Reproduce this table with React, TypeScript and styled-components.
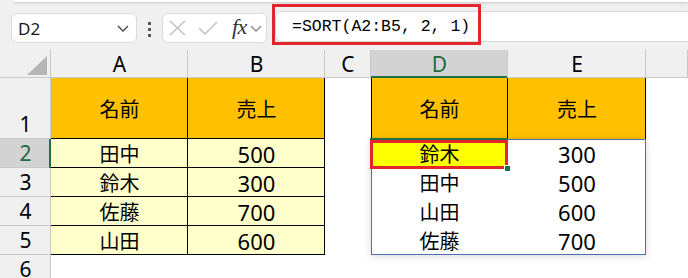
import React from "react";
import styled, { createGlobalStyle, css } from "styled-components";

const GlobalStyle = createGlobalStyle`
  html, body {
    margin: 0;
    padding: 0;
    background: #ffffff;
    overflow: hidden;
  }
  body {
    font-family: "Noto Sans", "Noto Sans CJK JP", sans-serif;
  }
`;

const Page = styled.div`
  width: 688px;
  height: 278px;
  overflow: hidden;
  background: #fff;
`;

/* ---------- formula bar ---------- */

const Top = styled.div`
  background: #f0f0f0;
  height: 50px;
  display: flex;
  flex-direction: column;
`;

const RibbonEdge = styled.div`
  height: 2px;
  margin-left: 13px;
  background: #fff;
  border-bottom-left-radius: 6px;
  box-shadow: 0 1px 3px rgba(0, 0, 0, 0.22);
`;

const Bar = styled.div`
  display: flex;
  align-items: flex-start;
  padding: 10px 0 0 11px;
`;

const Box = styled.div`
  height: 30px;
  box-sizing: border-box;
  background: #fff;
  border: 1px solid #dadada;
  border-radius: 6px;
  display: flex;
  align-items: center;
`;

const NameBox = styled(Box)`
  margin-top: 1px;
  width: 126px;
  padding: 0 7px 0 6px;
  justify-content: space-between;
  font-size: 17px;
  color: #1a1a1a;
`;

const Dots = styled.div`
  margin: 10px 11px 0 11px;
  display: flex;
  flex-direction: column;
  gap: 3px;
  span {
    width: 3px;
    height: 3px;
    background: #555;
  }
`;

const FxGroup = styled(Box)`
  margin-top: 1px;
  width: 105px;
  padding: 0 0 0 6px;
  gap: 0;
`;

const Fx = styled.span`
  font-family: "Liberation Serif", serif;
  font-style: italic;
  font-size: 22px;
  color: #333;
  margin: -3px 3px 0 14px;
  letter-spacing: -0.5px;
`;

const FormulaInput = styled.div`
  position: relative;
  flex: 1;
  margin-left: 8px;
  margin-top: -1px;
  height: 31px;
  box-sizing: border-box;
  background: #fff;
  border: 1px solid #d8d8d8;
  border-right: none;
  border-radius: 6px 0 0 6px;
  display: flex;
  align-items: center;
  padding-left: 16px;
  font-family: "Liberation Mono", monospace;
  font-size: 16.5px;
  color: #000;
  white-space: pre;
`;

const RedFrame = styled.div`
  position: absolute;
  left: -4px;
  top: -8px;
  width: 209px;
  height: 41px;
  box-sizing: border-box;
  border: 3px solid #e3262c;
  pointer-events: none;
`;

/* ---------- sheet ---------- */

const Sheet = styled.div`
  display: grid;
  grid-template-columns: 51px 137px 137px 46px 137px 138px 1fr;
  grid-template-rows: 28px 61px 29px 29px 29px 29px 29px;
`;

const place = css<{ $c: number; $r: number }>`
  grid-column: ${({ $c }) => $c};
  grid-row: ${({ $r }) => $r};
`;

const Corner = styled.div<{ $c: number; $r: number }>`
  ${place};
  background: #f0f0f0;
  box-shadow: inset -1px -1px 0 #c9c9c9;
  display: flex;
  align-items: flex-end;
  justify-content: flex-end;
  padding: 0 4px 3px 0;
`;

const ColHead = styled.div<{ $c: number; $r: number; $active?: boolean }>`
  ${place};
  display: flex;
  align-items: center;
  justify-content: center;
  font-size: 21px;
  background: ${({ $active }) => ($active ? "#d3d3d3" : "#f0f0f0")};
  color: ${({ $active }) => ($active ? "#1d6b40" : "#000")};
  box-shadow: ${({ $active }) =>
    $active
      ? "inset -1px 0 0 #c9c9c9, inset 0 -2px 0 #1e7145"
      : "inset -1px 0 0 #c9c9c9, inset 0 -1px 0 #c9c9c9"};
`;

const RowHead = styled.div<{ $c: number; $r: number; $active?: boolean }>`
  ${place};
  display: flex;
  align-items: flex-end;
  justify-content: center;
  padding-bottom: 4px;
  box-sizing: border-box;
  line-height: 1;
  font-size: 21px;
  background: ${({ $active }) => ($active ? "#d3d3d3" : "#f0f0f0")};
  color: ${({ $active }) => ($active ? "#1d6b40" : "#000")};
  box-shadow: ${({ $active }) =>
    $active
      ? "inset -2px 0 0 #1e7145, inset 0 -1px 0 #c9c9c9"
      : "inset -1px 0 0 #c9c9c9, inset 0 -1px 0 #c9c9c9"};
`;

const lineShadow = (lines: string) => {
  const parts: string[] = [];
  if (lines.includes("r")) parts.push("inset -1px 0 0 #000");
  if (lines.includes("b")) parts.push("inset 0 -1px 0 #000");
  if (lines.includes("l")) parts.push("inset 1px 0 0 #000");
  return parts.length ? parts.join(", ") : "none";
};

const Cell = styled.div<{
  $c: number;
  $r: number;
  $bg?: string;
  $lines?: string;
  $num?: boolean;
}>`
  ${place};
  display: flex;
  align-items: center;
  justify-content: center;
  background: ${({ $bg }) => $bg || "#fff"};
  box-shadow: ${({ $lines }) => lineShadow($lines || "")};
  color: #000;
  font-family: ${({ $num }) =>
    $num ? '"Noto Sans", sans-serif' : '"Noto Sans CJK JP", sans-serif'};
  font-size: ${({ $num }) => ($num ? "22px" : "20px")};
`;

const SpillRange = styled.div`
  grid-column: 5 / 7;
  grid-row: 3 / 7;
  border: 1px solid #4a6fb6;
  box-shadow: 0 1px 8px rgba(0, 0, 0, 0.16);
  pointer-events: none;
  z-index: 1;
`;

const ActiveCell = styled.div`
  grid-column: 5;
  grid-row: 3;
  position: relative;
  margin: 1px 0 -1px -1px;
  border: 3px solid #e3262c;
  box-shadow: 0 -2px 0 #1e7145;
  pointer-events: none;
  z-index: 2;
`;

const FillHandle = styled.span`
  position: absolute;
  right: -5px;
  bottom: -5px;
  width: 5px;
  height: 5px;
  background: #1e7145;
  border-left: 1px solid #fff;
  border-top: 1px solid #fff;
`;

const ORANGE = "#ffc000";
const CREAM = "#ffffcc";

const source = [
  ["田中", "500"],
  ["鈴木", "300"],
  ["佐藤", "700"],
  ["山田", "600"],
];

const sorted = [
  ["鈴木", "300"],
  ["田中", "500"],
  ["山田", "600"],
  ["佐藤", "700"],
];

const Chevron = ({ color }: { color: string }) => (
  <svg width="12" height="7" viewBox="0 0 12 7">
    <path d="M1 1l5 5 5-5" fill="none" stroke={color} strokeWidth="1.3" />
  </svg>
);

export default function App() {
  const letters = ["A", "B", "C", "D", "E", ""];
  return (
    <Page>
      <GlobalStyle />
      <Top>
        <RibbonEdge />
        <Bar>
          <NameBox>
            <span>D2</span>
            <Chevron color="#444" />
          </NameBox>
          <Dots>
            <span />
            <span />
            <span />
          </Dots>
          <FxGroup>
            <svg width="17" height="16" viewBox="0 0 17 16">
              <path d="M1 1l15 14M16 1L1 15" stroke="#bdbdbd" strokeWidth="1.4" />
            </svg>
            <svg width="20" height="14" viewBox="0 0 20 14" style={{ marginLeft: 12 }}>
              <path d="M1 7l6 6L19 1" fill="none" stroke="#bdbdbd" strokeWidth="1.4" />
            </svg>
            <Fx>fx</Fx>
            <Chevron color="#8a8a8a" />
          </FxGroup>
          <FormulaInput>
            =SORT(A2:B5, 2, 1)
            <RedFrame />
          </FormulaInput>
        </Bar>
      </Top>

      <Sheet>
        <Corner $c={1} $r={1}>
          <svg width="20" height="19" viewBox="0 0 20 19">
            <path d="M20 0V19H0Z" fill="#b5b5b5" />
          </svg>
        </Corner>
        {letters.map((l, i) => (
          <ColHead key={i} $c={i + 2} $r={1} $active={l === "D"}>
            {l}
          </ColHead>
        ))}
        {[1, 2, 3, 4, 5, 6].map((n) => (
          <RowHead key={n} $c={1} $r={n + 1} $active={n === 2}>
            {n}
          </RowHead>
        ))}

        {/* row 1 headers */}
        <Cell $c={2} $r={2} $bg={ORANGE} $lines="rb">名前</Cell>
        <Cell $c={3} $r={2} $bg={ORANGE} $lines="rb">売上</Cell>
        <Cell $c={5} $r={2} $bg={ORANGE} $lines="lr">名前</Cell>
        <Cell $c={6} $r={2} $bg={ORANGE} $lines="r">売上</Cell>

        {source.map(([name, amt], i) => (
          <React.Fragment key={name}>
            <Cell $c={2} $r={i + 3} $bg={CREAM} $lines="rb">{name}</Cell>
            <Cell $c={3} $r={i + 3} $bg={CREAM} $lines="rb" $num>{amt}</Cell>
          </React.Fragment>
        ))}

        {sorted.map(([name, amt], i) => (
          <React.Fragment key={name}>
            <Cell $c={5} $r={i + 3} $bg={i === 0 ? "#ffff00" : "#fff"}>{name}</Cell>
            <Cell $c={6} $r={i + 3} $num>{amt}</Cell>
          </React.Fragment>
        ))}

        <SpillRange />
        <ActiveCell>
          <FillHandle />
        </ActiveCell>
      </Sheet>
    </Page>
  );
}
